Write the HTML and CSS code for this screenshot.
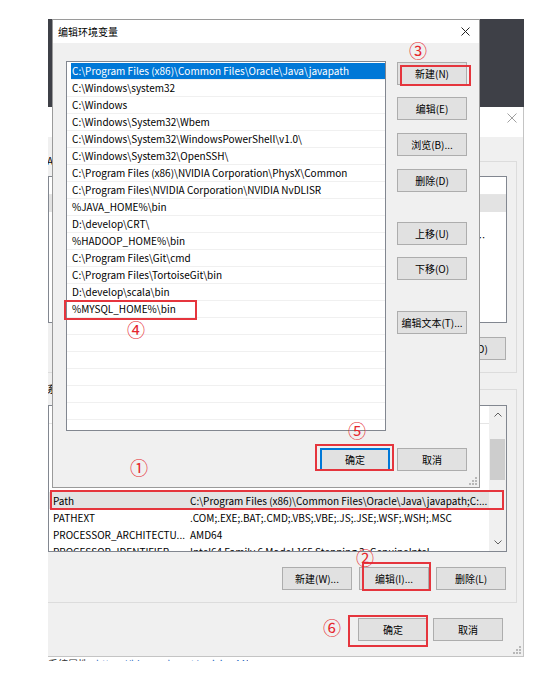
FILE: index.html
```html
<!DOCTYPE html>
<html lang="zh-CN">
<head>
<meta charset="utf-8">
<title>编辑环境变量</title>
<link rel="stylesheet" href="styles.css">
</head>
<body>
<div class="stage">
  <div class="desk">
    <div class="backwin">
      <div class="bw-title">
        <svg class="bw-close" width="10" height="10" viewBox="0 0 10 10"><path d="M0.5 0.5L9.5 9.5M9.5 0.5L0.5 9.5" stroke="#a0a0a0" stroke-width="1"/></svg>
      </div>
      <div class="bw-body">
        <div class="group">
          <span class="legend">Administrator 的用户变量(U)</span>
          <div class="vlist">
            <div class="cols">
              <div class="lhead"><span class="c1">变量</span><span class="c2">值</span></div>
              <div class="lrow sel"><span class="c1">OneDrive</span><span class="c2 clip">C:\Users\Administrator\OneDrive</span></div>
              <div class="lrow"><span class="c1">TEMP</span><span class="c2 clip">%USERPROFILE%\AppData\Local\Temp</span></div>
              <div class="lrow"><span class="c1">Path</span><span class="c2 clip">C:\Users\Administrator\AppData\Local\Microsoft\WindowsApps;C:\Program Files\Bandizip\;C:\Users</span></div>
              <div class="lrow"><span class="c1">TMP</span><span class="c2 clip">%USERPROFILE%\AppData\Local\Temp</span></div>
            </div>
          </div>
          <div class="btnrow">
            <button class="btn">新建(N)...</button>
            <button class="btn">编辑(E)...</button>
            <button class="btn">删除(D)</button>
          </div>
        </div>
        <div class="group group-sys">
          <span class="legend">系统变量(S)</span>
          <div class="vlist">
            <div class="cols">
              <div class="lhead"><span class="c1">变量</span><span class="c2">值</span></div>
              <div class="lrow"><span class="c1">JAVA_HOME</span><span class="c2">D:\develop\Java\jdk1.8.0_201</span></div>
              <div class="lrow"><span class="c1">MYSQL_HOME</span><span class="c2">D:\develop\mysql-8.0.19</span></div>
              <div class="lrow"><span class="c1">NUMBER_OF_PROCESSORS</span><span class="c2">16</span></div>
              <div class="lrow"><span class="c1">OS</span><span class="c2">Windows NT</span></div>
              <div class="lrow sel"><span class="c1">Path</span><span class="c2">C:\Program Files (x86)\Common Files\Oracle\Java\javapath;C:...</span></div>
              <div class="lrow"><span class="c1">PATHEXT</span><span class="c2">.COM;.EXE;.BAT;.CMD;.VBS;.VBE;.JS;.JSE;.WSF;.WSH;.MSC</span></div>
              <div class="lrow"><span class="c1">PROCESSOR_ARCHITECTU...</span><span class="c2">AMD64</span></div>
              <div class="lrow"><span class="c1">PROCESSOR_IDENTIFIER</span><span class="c2">Intel64 Family 6 Model 165 Stepping 3, GenuineIntel</span></div>
            </div>
            <div class="vscroll">
              <div class="sb-btn"><svg width="8" height="5" viewBox="0 0 8 5"><path d="M0.5 4.5L4 1L7.5 4.5" stroke="#606060" fill="none"/></svg></div>
              <div class="sb-track"><div class="sb-thumb"></div></div>
              <div class="sb-btn"><svg width="8" height="5" viewBox="0 0 8 5"><path d="M0.5 0.5L4 4L7.5 0.5" stroke="#606060" fill="none"/></svg></div>
            </div>
          </div>
          <div class="btnrow">
            <button class="btn">新建(W)...</button>
            <button class="btn">编辑(I)...</button>
            <button class="btn">删除(L)</button>
          </div>
        </div>
        <div class="bw-foot">
          <button class="btn">确定</button>
          <button class="btn">取消</button>
        </div>
      </div>
      <svg class="grip" width="8" height="8" viewBox="0 0 8 8"><g fill="#b8b8b8"><rect x="6" y="0" width="2" height="2"/><rect x="3" y="3" width="2" height="2"/><rect x="6" y="3" width="2" height="2"/><rect x="0" y="6" width="2" height="2"/><rect x="3" y="6" width="2" height="2"/><rect x="6" y="6" width="2" height="2"/></g></svg>
    </div>

    <div class="dialog">
      <div class="dlg-title">
        <span class="dlg-caption">编辑环境变量</span>
        <svg width="9" height="9" viewBox="0 0 9 9"><path d="M0.5 0.5L8.5 8.5M8.5 0.5L0.5 8.5" stroke="#222" stroke-width="1"/></svg>
      </div>
      <div class="dlg-body">
        <div class="dlg-main">
          <div class="plist">
            <div class="prow sel">C:\Program Files (x86)\Common Files\Oracle\Java\javapath</div>
            <div class="prow">C:\Windows\system32</div>
            <div class="prow">C:\Windows</div>
            <div class="prow">C:\Windows\System32\Wbem</div>
            <div class="prow">C:\Windows\System32\WindowsPowerShell\v1.0\</div>
            <div class="prow">C:\Windows\System32\OpenSSH\</div>
            <div class="prow">C:\Program Files (x86)\NVIDIA Corporation\PhysX\Common</div>
            <div class="prow">C:\Program Files\NVIDIA Corporation\NVIDIA NvDLISR</div>
            <div class="prow">%JAVA_HOME%\bin</div>
            <div class="prow">D:\develop\CRT\</div>
            <div class="prow">%HADOOP_HOME%\bin</div>
            <div class="prow">C:\Program Files\Git\cmd</div>
            <div class="prow">C:\Program Files\TortoiseGit\bin</div>
            <div class="prow">D:\develop\scala\bin</div>
            <div class="prow">%MYSQL_HOME%\bin</div>
            <div class="prow"></div>
            <div class="prow"></div>
            <div class="prow"></div>
            <div class="prow"></div>
            <div class="prow"></div>
            <div class="prow"></div>
            <div class="prow"></div>
          </div>
          <div class="sidebtns">
            <button class="btn">新建(N)</button>
            <button class="btn">编辑(E)</button>
            <button class="btn">浏览(B)...</button>
            <button class="btn">删除(D)</button>
            <button class="btn">上移(U)</button>
            <button class="btn">下移(O)</button>
            <button class="btn">编辑文本(T)...</button>
          </div>
        </div>
        <div class="dlg-foot">
          <button class="btn btn-default">确定</button>
          <button class="btn">取消</button>
        </div>
      </div>
      <svg class="grip" width="8" height="8" viewBox="0 0 8 8"><g fill="#b8b8b8"><rect x="6" y="0" width="2" height="2"/><rect x="3" y="3" width="2" height="2"/><rect x="6" y="3" width="2" height="2"/><rect x="0" y="6" width="2" height="2"/><rect x="3" y="6" width="2" height="2"/><rect x="6" y="6" width="2" height="2"/></g></svg>
    </div>
  </div>

  <div class="footnote"><span class="fn-dark">系统属性</span><span class="fn-link">https://blog.csdn.net/weixin_44033208</span></div>

  <div class="rbox r3"></div>
  <div class="rbox r4"></div>
  <div class="rbox r5"></div>
  <div class="rbox r1"></div>
  <div class="rbox r2"></div>
  <div class="rbox r6"></div>

  <span class="num n1">①</span>
  <span class="num n2">②</span>
  <span class="num n3">③</span>
  <span class="num n4">④</span>
  <span class="num n5">⑤</span>
  <span class="num n6">⑥</span>
</div>
</body>
</html>
```

FILE: styles.css
```css
* { box-sizing: border-box; }
html, body { margin: 0; padding: 0; background: #fff; }
body {
  font-family: "Noto Sans CJK SC", "Noto Sans", sans-serif;
  font-size: 10px;
  color: #000;
}
.stage { position: relative; width: 552px; height: 686px; overflow: hidden; background: #fff; }

.desk {
  position: absolute; left: 48px; top: 19px;
  width: 476px; height: 638px;
  background: #3e4047;
  overflow: hidden;
}

/* ---------- back window ---------- */
.backwin {
  position: absolute; left: -22px; top: 88px;
  width: 498px; height: 550px;
  background: #f0f0f0;
  border-right: 1px solid #c4c4c4;
  border-bottom: 1px solid #c4c4c4;
  display: flex; flex-direction: column;
}
.bw-title {
  height: 30px; flex: none; background: #fff;
  display: flex; justify-content: flex-end; align-items: flex-start;
  padding: 6px 6px 0 0;
}
.bw-body { flex: 1; padding: 24px 6px 0 12px; display: flex; flex-direction: column; }
.group {
  position: relative;
  border: 1px solid #dcdcdc;
  padding: 14px 9px 12px 9px;
  display: flex; flex-direction: column; gap: 14px;
}
.group-sys { margin-top: 16px; padding-top: 15px; gap: 15px; }
.legend {
  position: absolute; top: -9px; left: 6px;
  background: #f0f0f0; padding: 0 2px; line-height: 16px;
}
.vlist {
  height: 147px; flex: none;
  background: #fff; border: 1px solid #828790;
  display: flex; overflow: hidden;
}
.cols { flex: 1; overflow: hidden; }
.lhead { height: 18px; display: flex; align-items: center; border-bottom: 1px solid #e5e5e5; }
.lrow { height: 17px; display: flex; align-items: center; white-space: nowrap; }
.lrow.sel { background: #e3e3e3; }
.c1 { width: 141px; flex: none; padding-left: 4px; overflow: hidden; }
.c2 { white-space: nowrap; }
.c2.clip { width: 297px; overflow: hidden; text-overflow: ellipsis; }
.vscroll { width: 17px; flex: none; background: #f0f0f0; display: flex; flex-direction: column; }
.sb-btn { height: 17px; flex: none; display: flex; align-items: center; justify-content: center; }
.sb-track { flex: 1; padding: 16px 1px 0 1px; }
.sb-thumb { height: 41px; background: #cdcdcd; }

.btnrow { display: flex; justify-content: flex-end; gap: 7px; padding-right: 1px; }
.bw-foot { margin-top: 15px; display: flex; justify-content: flex-end; gap: 5px; padding-right: 14px; }

.btn {
  width: 70px; height: 23px; flex: none;
  margin: 0; padding: 0;
  background: #e1e1e1; border: 1px solid #adadad; border-radius: 0;
  font: inherit; color: #000;
  display: flex; align-items: center; justify-content: center;
  white-space: nowrap;
}
.btn-default { border: 2px solid #0078d7; }

.grip { position: absolute; right: 2px; bottom: 2px; }

/* ---------- front dialog ---------- */
.dialog {
  position: absolute; left: 4px; top: 0;
  width: 428px; height: 469px;
  background: #f0f0f0;
  border: 1px solid #9a9a9a;
  display: flex; flex-direction: column;
}
.dlg-title {
  height: 23px; flex: none; background: #fff;
  display: flex; align-items: center; justify-content: space-between;
  padding: 0 9px 0 5px;
}
.dlg-caption { font-size: 10px; }
.dlg-body { flex: 1; padding: 18px 12px 16px 13px; display: flex; flex-direction: column; gap: 17px; }
.dlg-main { display: flex; gap: 11px; height: 370px; flex: none; }
.plist {
  width: 320px; height: 370px; flex: none;
  background: #fff; border: 1px solid #828790;
  padding-top: 1px; overflow: hidden;
}
.prow {
  height: 17px; line-height: 16px;
  border-bottom: 1px solid #f0f0f0;
  padding-left: 5px; white-space: nowrap;
}
.prow.sel { background: #0078d7; color: #fff; margin-left: 4px; padding-left: 1px; }
.sidebtns { display: flex; flex-direction: column; }
.sidebtns .btn:nth-child(1) { margin-top: 1px; }
.sidebtns .btn:nth-child(2) { margin-top: 12px; }
.sidebtns .btn:nth-child(3) { margin-top: 13px; }
.sidebtns .btn:nth-child(4) { margin-top: 13px; }
.sidebtns .btn:nth-child(5) { margin-top: 30px; }
.sidebtns .btn:nth-child(6) { margin-top: 12px; }
.sidebtns .btn:nth-child(7) { margin-top: 31px; }
.dlg-foot { display: flex; justify-content: flex-end; gap: 7px; }

/* ---------- clipped footnote ---------- */
.footnote {
  position: absolute; left: 48px; top: 657px;
  width: 200px; height: 4px; overflow: hidden;
  font-size: 10px; line-height: 14px; white-space: nowrap;
}
.fn-dark, .fn-link { display: inline-block; margin-top: -3px; }
.fn-dark { color: #333; margin-right: 8px; }
.fn-link { color: #2b6cc4; }

/* ---------- annotations ---------- */
.rbox { position: absolute; border: 2px solid #e5353d; }
.r3 { left: 400px; top: 65px; width: 71px; height: 21px; }
.r4 { left: 64px; top: 300px; width: 133px; height: 20px; }
.r5 { left: 315px; top: 444px; width: 79px; height: 27px; }
.r1 { left: 50px; top: 490px; width: 454px; height: 20px; }
.r2 { left: 362px; top: 562px; width: 69px; height: 29px; }
.r6 { left: 348px; top: 615px; width: 80px; height: 32px; }

.num {
  position: absolute;
  color: #e5262d;
  font-family: "Noto Sans CJK SC", "DejaVu Sans", sans-serif;
  font-size: 18px; line-height: 18px;
  transform: translate(-50%, -50%);
}
.n1 { left: 139px; top: 467px; }
.n2 { left: 365px; top: 557px; }
.n3 { left: 418px; top: 50px; }
.n4 { left: 136px; top: 329px; }
.n5 { left: 357px; top: 430px; }
.n6 { left: 332px; top: 627px; }
```
